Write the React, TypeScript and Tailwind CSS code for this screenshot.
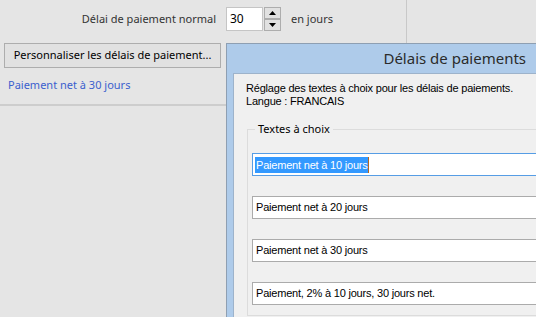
import React from "react";

const ui = { fontFamily: '"Segoe UI", "Noto Sans", "Open Sans", sans-serif' };
const ms = { fontFamily: '"Liberation Sans", Arial, sans-serif' };

const choices = [
  "Paiement net à 20 jours",
  "Paiement net à 30 jours",
  "Paiement, 2% à 10 jours, 30 jours net.",
];

function SpinButton({ up }: { up?: boolean }) {
  return (
    <div className="flex h-[12px] w-[17px] items-center justify-center border border-[#adadad] bg-[#e1e1e1]">
      <svg width="7" height="4" viewBox="0 0 7 4">
        {up ? <path d="M3.5 0L7 4H0z" fill="#000" /> : <path d="M0 0h7L3.5 4z" fill="#000" />}
      </svg>
    </div>
  );
}

export default function App() {
  return (
    <div className="relative h-[317px] w-[536px] overflow-hidden bg-[#e5e5e5]" style={ui}>
      {/* top bar */}
      <div className="flex h-[43px]">
        <div className="flex w-[407px] items-start border-r border-[#c8c8c8] pt-[7px]">
          <div className="w-[216px] whitespace-nowrap pt-[4px] text-right text-[11px] leading-[16px] text-[#333]">
            Délai de paiement normal
          </div>
          <div className="ml-[10px] flex h-[24px] w-[37px] items-center border border-[#c5c5c5] bg-white pl-[3px] text-[12px] text-black">
            30
          </div>
          <div className="ml-[1px] flex flex-col">
            <SpinButton up />
            <SpinButton />
          </div>
          <div className="ml-[10px] pt-[4px] text-[11px] leading-[16px] text-[#333]">en jours</div>
        </div>
      </div>

      {/* left panel */}
      <div className="w-[226px]">
        <button className="ml-[4px] flex h-[25px] w-[217px] items-center justify-center whitespace-nowrap border border-[#adadad] bg-[#e1e1e1] text-[11px] text-black">
          Personnaliser les délais de paiement...
        </button>
        <div className="ml-[8px] mt-[9px] text-[11px] leading-[16px] text-[#3b5fce]">Paiement net à 30 jours</div>
        <div className="mt-[11px] h-[2px] bg-[#cdcdcd]" />
      </div>

      {/* dialog window */}
      <div className="absolute left-[226px] top-[43px] flex h-[290px] w-[330px] flex-col border-l border-t border-[#8e9fb2] bg-[#aecbea]">
        <div className="flex h-[29px] items-center justify-end whitespace-nowrap pr-[30px] text-[15px] text-[#2b2b2b]">
          Délais de paiements
        </div>
        <div className="ml-[6px] flex-1 border-l border-t border-[#9db3cb] bg-[#f0f0f0] pl-[12px] pt-[8px]" style={ms}>
          <div className="text-[11px] leading-[13px] tracking-[-0.2px] text-black">
            <div>Réglage des textes à choix pour les délais de paiements.</div>
            <div>Langue : FRANCAIS</div>
          </div>
          <fieldset className="ml-[1px] mt-[13px] border border-[#dcdcdc] pb-[10px] pl-[4px] pr-0">
            <legend className="ml-[3px] px-[3px] text-[11px] leading-[16px] text-black" style={ui}>
              Textes à choix
            </legend>
            <div className="mt-[16px] flex flex-col gap-[20px] tracking-[-0.2px]">
              <div className="flex h-[23px] items-center border border-[#569de5] bg-white pl-[2px] text-[11px] text-black">
                <span className="border-r border-[#b4661f] bg-[#3399ff] pl-[1px] leading-[16px] text-white">
                  Paiement net à 10 jours
                </span>
              </div>
              {choices.map((c) => (
                <div
                  key={c}
                  className="flex h-[23px] items-center border border-[#ababab] bg-white pl-[3px] text-[11px] text-black"
                >
                  {c}
                </div>
              ))}
            </div>
          </fieldset>
        </div>
      </div>
    </div>
  );
}
